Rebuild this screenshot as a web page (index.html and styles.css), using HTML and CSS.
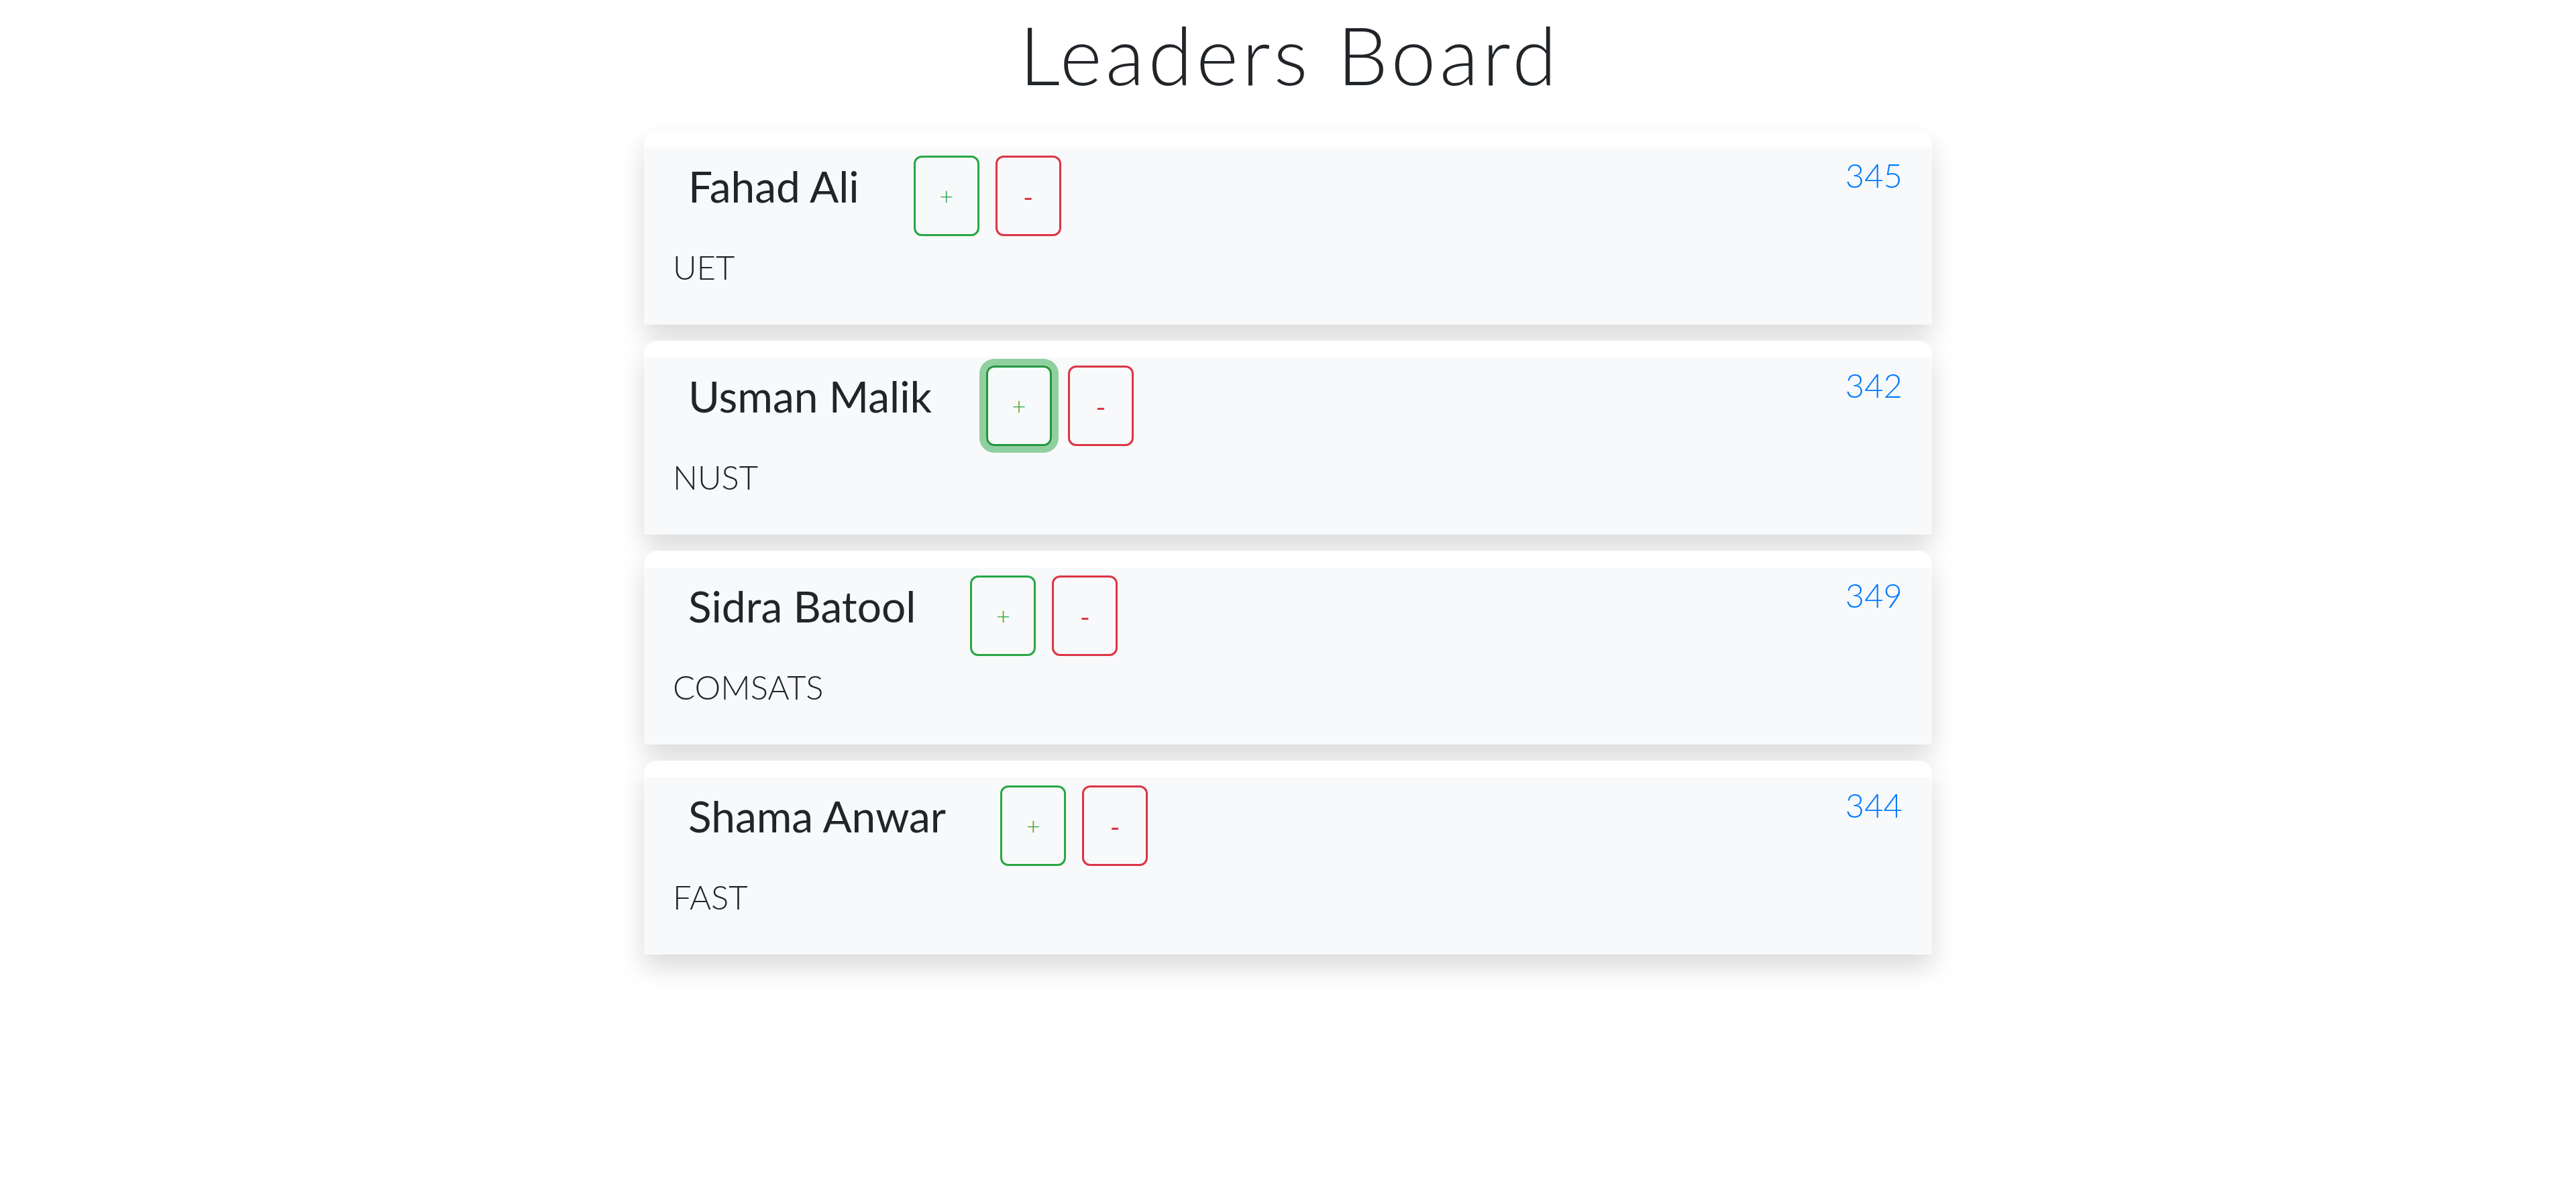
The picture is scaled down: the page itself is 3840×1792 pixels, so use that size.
FILE: index.html
```html
<!DOCTYPE html>
<html lang="en">
<head>
<meta charset="utf-8">
<title>Leaders Board</title>
<link rel="stylesheet" href="styles.css">
</head>
<body>
  <h1 class="title">Leaders Board</h1>
  <main class="board">
    <section class="card">
      <div class="card-body">
        <div class="row">
          <h3 class="name">Fahad Ali</h3>
          <button class="btn btn-plus">+</button>
          <button class="btn btn-minus">-</button>
          <span class="score">345</span>
        </div>
        <p class="school">UET</p>
      </div>
    </section>
    <section class="card">
      <div class="card-body">
        <div class="row">
          <h3 class="name">Usman Malik</h3>
          <button class="btn btn-plus is-focused">+</button>
          <button class="btn btn-minus">-</button>
          <span class="score">342</span>
        </div>
        <p class="school">NUST</p>
      </div>
    </section>
    <section class="card">
      <div class="card-body">
        <div class="row">
          <h3 class="name">Sidra Batool</h3>
          <button class="btn btn-plus">+</button>
          <button class="btn btn-minus">-</button>
          <span class="score">349</span>
        </div>
        <p class="school">COMSATS</p>
      </div>
    </section>
    <section class="card">
      <div class="card-body">
        <div class="row">
          <h3 class="name">Shama Anwar</h3>
          <button class="btn btn-plus">+</button>
          <button class="btn btn-minus">-</button>
          <span class="score">344</span>
        </div>
        <p class="school">FAST</p>
      </div>
    </section>
  </main>
</body>
</html>
```
FILE: styles.css
```css
html, body {
  margin: 0;
  padding: 0;
  background: #ffffff;
}

body {
  font-family: "Lato", "Liberation Sans", sans-serif;
  color: #212529;
  min-height: 1792px;
}

.title {
  margin: 9px 0 0 0;
  font-size: 120px;
  font-weight: 300;
  line-height: 1.2;
  letter-spacing: 5.5px;
  text-indent: 5.5px;
  text-align: center;
  color: #212529;
}

.board {
  width: 1920px;
  margin: 42px auto 0 auto;
  padding-bottom: 120px;
  display: flex;
  flex-direction: column;
  gap: 24px;
}

.card {
  background: #ffffff;
  border-radius: 20px 20px 0 0;
  padding-top: 25px;
  box-shadow: 0 19px 38px rgba(0, 0, 0, 0.15);
}

.card-body {
  background: #f8f9fa;
  height: 264px;
  box-sizing: border-box;
  padding: 12px 44px 0 43px;
}

.row {
  display: flex;
  align-items: flex-start;
}

.name {
  margin: 8px 81px 0 23px;
  font-size: 64px;
  font-weight: 400;
  line-height: 1.2;
  color: #212529;
}

.btn {
  width: 98px;
  height: 120px;
  box-sizing: border-box;
  margin-right: 24px;
  border: 3px solid;
  border-radius: 12px;
  background: transparent;
  font-family: "Lato", "Liberation Sans", sans-serif;
  font-size: 36px;
  font-weight: 300;
  display: flex;
  align-items: center;
  justify-content: center;
  padding: 0;
}

.btn-plus {
  color: #28a745;
  border-color: #28a745;
}

.btn-minus {
  color: #dc3545;
  border-color: #dc3545;
  font-size: 40px;
  font-weight: 400;
  padding-top: 4px;
}

.btn-plus.is-focused {
  border-color: #23963e;
  box-shadow: 0 0 0 10px rgba(40, 167, 69, 0.5);
}

.score {
  margin-left: auto;
  font-size: 49px;
  font-weight: 300;
  line-height: 1.2;
  color: #007bff;
}

.school {
  margin: 17px 0 0 0;
  font-size: 49px;
  font-weight: 300;
  line-height: 1.2;
  color: #212529;
}
```
